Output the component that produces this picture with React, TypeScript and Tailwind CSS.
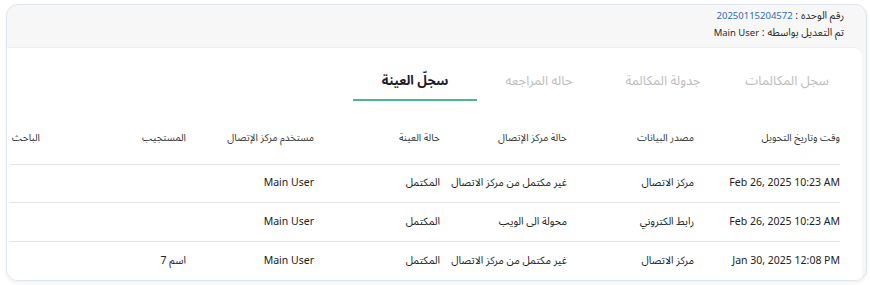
import React from "react";

const tabs = [
  { label: "سجل المكالمات", active: false },
  { label: "جدولة المكالمة", active: false },
  { label: "حاله المراجعه", active: false },
  { label: "سجلّ العينة", active: true },
];

const columns = [
  { label: "وقت وتاريخ التحويل", w: "w-[146px]" },
  { label: "مصدر البيانات", w: "w-[127px]" },
  { label: "حالة مركز الإتصال", w: "w-[127px]" },
  { label: "حالة العينة", w: "w-[126px]" },
  { label: "مستخدم مركز الإتصال", w: "w-[128px]" },
  { label: "المستجيب", w: "w-[146px]" },
  { label: "الباحث", w: "" },
];

const rows = [
  ["Feb 26, 2025 10:23 AM", "مركز الاتصال", "غير مكتمل من مركز الاتصال", "المكتمل", "Main User", "", ""],
  ["Feb 26, 2025 10:23 AM", "رابط الكتروني", "محولة الى الويب", "المكتمل", "Main User", "", ""],
  ["Jan 30, 2025 12:08 PM", "مركز الاتصال", "غير مكتمل من مركز الاتصال", "المكتمل", "Main User", "اسم 7", ""],
];

export default function App() {
  return (
    <main className="w-[870px] h-[285px] bg-white pt-[4px] pl-[6px] pr-[3px] font-['Noto_Sans','Noto_Sans_Arabic','Noto_Kufi_Arabic','DejaVu_Sans',sans-serif]">
      <div
        dir="rtl"
        className="h-[277px] rounded-[12px] border border-[#dfe5ec] bg-[#f7f7f7] shadow-[0_2px_4px_rgba(0,0,0,0.06)] overflow-hidden flex flex-col"
      >
        {/* unit info */}
        <div className="h-[42px] shrink-0 pr-[22px] pt-[2px] text-[10.5px] leading-[17px] text-[#2b2b2b]">
          <p>
            رقم الوحده : <span className="text-[9.5px] text-[#2f6db5]">20250115204572</span>
          </p>
          <p>
            تم التعديل بواسطه : <span dir="ltr" className="text-[9.5px]">Main User</span>
          </p>
        </div>

        <div className="flex-1 flex">
          <div className="flex-1 mr-[4px] bg-white border-t border-[#f1eeea] rounded-tr-[8px] flex flex-col">
            {/* tabs */}
            <div className="flex pr-[13px] pt-[21px] h-[55px]">
              {tabs.map((t) => (
                <div
                  key={t.label}
                  className={
                    "w-[124px] h-[32px] flex items-start justify-center pt-[2px] text-[13px] " +
                    (t.active
                      ? "font-bold text-[#1c1c2b] border-b-2 border-[#4cb98b]"
                      : "text-[#bdbdbd]")
                  }
                >
                  {t.label}
                </div>
              ))}
            </div>

            {/* table */}
            <table className="mr-[22px] w-[830px] table-fixed border-collapse text-right">
              <thead>
                <tr className="h-[61px] border-b border-[#e4e4e4]">
                  {columns.map((c) => (
                    <th
                      key={c.label}
                      className={c.w + " pl-[4px] pt-[9px] align-middle font-normal text-[10px] text-[#333]"}
                    >
                      {c.label}
                    </th>
                  ))}
                </tr>
              </thead>
              <tbody>
                {rows.map((r, i) => (
                  <tr key={i} className={"h-[38.5px] " + (i < rows.length - 1 ? "border-b border-[#e4e4e4]" : "")}>
                    {r.map((cell, j) => (
                      <td key={j} className="pl-[4px] text-[10.5px] text-[#222] whitespace-nowrap">
                        {j === 0 || cell === "Main User" ? <span dir="ltr">{cell}</span> : cell}
                      </td>
                    ))}
                  </tr>
                ))}
              </tbody>
            </table>
          </div>
        </div>
      </div>
    </main>
  );
}
